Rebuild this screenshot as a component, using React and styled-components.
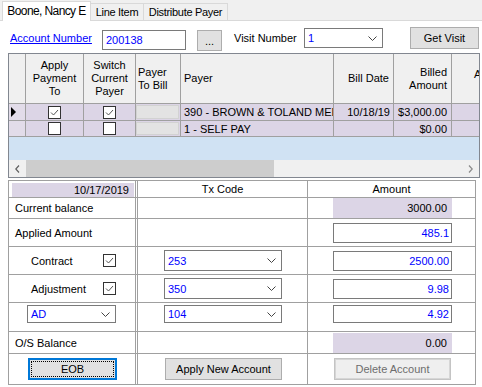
import styled, { createGlobalStyle } from "styled-components";

const PURPLE = "#dcd5e6";
const LINE = "#a0a0a0";
const FIELD = "#7a7a7a";
const BLUE = "#0000ff";

const GlobalStyle = createGlobalStyle`
  html, body {
    margin: 0;
    padding: 0;
    background: #fff;
  }
  body {
    font-family: "Liberation Sans", Arial, sans-serif;
    font-size: 11px;
    color: #000;
  }
  * {
    box-sizing: border-box;
  }
`;

const Window = styled.div`
  width: 482px;
  height: 387px;
  overflow: hidden;
  background: #fff;
`;

/* ---------- tabs ---------- */

const TabStrip = styled.div`
  display: flex;
  align-items: flex-end;
  height: 21px;
  padding-left: 2px;
  background: #f0f0f0;
  border-bottom: 1px solid #d9d9d9;
`;

const Tab = styled.div`
  display: flex;
  align-items: center;
  justify-content: center;
  width: ${({ $w }) => $w}px;
  height: ${({ $active }) => ($active ? "20px" : "17px")};
  margin-bottom: ${({ $active }) => ($active ? "-1px" : "0")};
  padding-bottom: ${({ $active }) => ($active ? "2px" : "0")};
  background: ${({ $active }) => ($active ? "#fff" : "#f0f0f0")};
  border: 1px solid #d9d9d9;
  border-bottom: none;
  border-left-width: ${({ $active }) => ($active ? "1px" : "0")};
  font-size: ${({ $active }) => ($active ? "12px" : "11px")};
  letter-spacing: ${({ $active }) => ($active ? "-0.6px" : "-0.3px")};
  white-space: nowrap;
`;

/* ---------- toolbar ---------- */

const Toolbar = styled.div`
  display: flex;
  align-items: flex-start;
  height: 23px;
  margin-top: 6px;
  padding-left: 10px;
`;

const AccountLink = styled.a`
  width: 92px;
  margin-top: 5px;
  line-height: 13px;
  color: ${BLUE};
  text-decoration: underline;
  cursor: pointer;
`;

const ToolLabel = styled.span`
  width: 70px;
  margin: 5px 0 0 12px;
  line-height: 13px;
`;

const TextField = styled.div`
  display: flex;
  align-items: center;
  width: ${({ $w }) => $w}px;
  height: ${({ $h }) => $h || 20}px;
  margin-top: ${({ $mt }) => $mt || 0}px;
  padding: 0 3px;
  border: 1px solid ${FIELD};
  background: #fff;
  color: ${BLUE};
`;

const WinButton = styled.button`
  display: flex;
  align-items: center;
  justify-content: center;
  width: ${({ $w }) => $w}px;
  height: ${({ $h }) => $h || 21}px;
  margin: ${({ $mt }) => $mt || 0}px 0 0 ${({ $ml }) => $ml || 0}px;
  padding: 0;
  font: inherit;
  color: ${({ disabled }) => (disabled ? "#6d6d6d" : "#000")};
  background: ${({ disabled }) => (disabled ? "#efefef" : "#e1e1e1")};
  border: 1px solid
    ${({ disabled, $focused }) =>
      $focused ? "#0078d7" : disabled ? "#c4c4c4" : "#adadad"};
  box-shadow: ${({ disabled, $focused }) =>
    $focused
      ? "inset 0 0 0 1px #0078d7"
      : disabled
      ? "inset 0 0 0 1px #d6d6d6"
      : "none"};
  outline: ${({ $focused }) => ($focused ? "1px dotted #000" : "none")};
  outline-offset: -4px;
`;

const SelectBox = styled.div`
  display: flex;
  align-items: center;
  justify-content: space-between;
  width: ${({ $w }) => $w}px;
  height: ${({ $h }) => $h || 21}px;
  margin-top: ${({ $mt }) => $mt || 0}px;
  padding: 0 5px 0 3px;
  border: 1px solid ${FIELD};
  background: #fff;
  color: ${BLUE};
`;

const Chevron = () => (
  <svg width="9" height="5" viewBox="0 0 9 5">
    <path d="M0.5 0.5 L4.5 4.5 L8.5 0.5" fill="none" stroke="#444" strokeWidth="1" />
  </svg>
);

const Select = ({ value, ...rest }) => (
  <SelectBox {...rest}>
    <span>{value}</span>
    <Chevron />
  </SelectBox>
);

/* ---------- payer grid ---------- */

const GridFrame = styled.div`
  display: flex;
  flex-direction: column;
  width: 472px;
  margin: 3px 0 0 8px;
  border: 1px solid #828790;
  overflow: hidden;
`;

const GridTable = styled.div`
  display: grid;
  grid-template-columns: 17px 58px 52px 45px 153px 60px 58px 80px;
  grid-template-rows: 50px 17px 16px;
`;

const justify = (a) =>
  a === "left" ? "flex-start" : a === "right" ? "flex-end" : "center";

const HeadCell = styled.div`
  display: flex;
  align-items: center;
  justify-content: ${({ $align }) => justify($align)};
  text-align: ${({ $align }) => $align || "center"};
  padding: ${({ $pad }) => $pad || "0 2px"};
  line-height: 13px;
  background: #f0f0f0;
  border-right: 1px solid ${LINE};
  border-bottom: 1px solid ${LINE};
  white-space: nowrap;
  overflow: hidden;
`;

const DataCell = styled.div`
  display: flex;
  align-items: center;
  justify-content: ${({ $align }) => justify($align)};
  padding: ${({ $pad }) => $pad || "0 3px"};
  background: ${({ $header }) => ($header ? "#e2dce9" : PURPLE)};
  border-right: 1px solid ${LINE};
  border-bottom: 1px solid ${LINE};
  white-space: nowrap;
  overflow: hidden;
`;

const Pointer = styled.span`
  width: 0;
  height: 0;
  border-left: 5px solid #000;
  border-top: 5px solid transparent;
  border-bottom: 5px solid transparent;
`;

const GrayBox = styled.div`
  flex: 1;
  align-self: stretch;
  margin: 1px 1px 1px 0;
  background: #e3e3e3;
  border: 1px solid #d2d2d2;
`;

const BlankArea = styled.div`
  height: 23px;
  background: #d0e2f3;
`;

const ScrollBar = styled.div`
  display: flex;
  height: 17px;
  background: #f0f0f0;
`;

const ScrollArrow = styled.div`
  display: flex;
  align-items: center;
  justify-content: center;
  width: 17px;
`;

const ScrollThumb = styled.div`
  width: 248px;
  background: #cdcdcd;
`;

const ScrollTrack = styled.div`
  flex: 1;
`;

const CheckFrame = styled.span`
  display: inline-flex;
  align-items: center;
  justify-content: center;
  width: 13px;
  height: 13px;
  border: 1px solid #333;
  background: #fff;
`;

const Check = ({ checked }) => (
  <CheckFrame>
    {checked && (
      <svg width="11" height="11" viewBox="0 0 11 11">
        <path d="M2 5.5 L4.5 8 L9 3" fill="none" stroke="#555" strokeWidth="1" />
      </svg>
    )}
  </CheckFrame>
);

/* ---------- distribution panel ---------- */

const Panel = styled.div`
  width: 468px;
  margin: 2px 0 0 8px;
  border: 1px solid ${LINE};
`;

const PanelRow = styled.div`
  display: grid;
  grid-template-columns: 127px 172px 1fr;
  height: ${({ $h }) => $h}px;
  border-bottom: 1px solid ${LINE};
  &:last-child {
    border-bottom: none;
  }
`;

const Cell = styled.div`
  display: flex;
  align-items: ${({ $top }) => ($top ? "flex-start" : "center")};
  justify-content: ${({ $center }) => ($center ? "center" : "flex-start")};
  padding-top: ${({ $top }) => ($top ? "2px" : "0")};
  padding-left: ${({ $pl }) => $pl || 0}px;
`;

const LabelCell = styled(Cell)`
  border-right: 1px solid ${LINE};
`;

const CodeCell = styled(Cell)`
  margin-left: 1px;
  border-left: 1px solid ${LINE};
  border-right: 1px solid ${LINE};
`;

const AmountCell = styled(Cell)``;

const DateBox = styled.div`
  flex: 1;
  align-self: stretch;
  margin: 2px 1px 0 3px;
  padding-right: 5px;
  line-height: 14px;
  text-align: right;
  background: ${PURPLE};
`;

const CheckLabel = styled.span`
  width: 72px;
`;

const AmountBox = styled.div`
  display: flex;
  align-items: center;
  justify-content: flex-end;
  width: 119px;
  height: ${({ $h }) => $h || 20}px;
  padding-right: ${({ $readOnly }) => ($readOnly ? "5px" : "2px")};
  background: ${({ $readOnly }) => ($readOnly ? PURPLE : "#fff")};
  border: ${({ $readOnly }) => ($readOnly ? "none" : `1px solid ${FIELD}`)};
  color: ${({ $readOnly }) => ($readOnly ? "#000" : BLUE)};
`;

const ArrowLeft = () => (
  <svg width="5" height="8" viewBox="0 0 5 8">
    <path d="M4 0.5 L0.8 4 L4 7.5" fill="none" stroke="#606060" strokeWidth="1.2" />
  </svg>
);

const ArrowRight = () => (
  <svg width="5" height="8" viewBox="0 0 5 8">
    <path d="M1 0.5 L4.2 4 L1 7.5" fill="none" stroke="#8a8a8a" strokeWidth="1.2" />
  </svg>
);

const payers = [
  { current: true, apply: true, sw: true, name: "390 - BROWN & TOLAND MED", date: "10/18/19", billed: "$3,000.00" },
  { current: false, apply: false, sw: false, name: "1 - SELF PAY", date: "", billed: "$0.00" },
];

const App = () => (
  <Window>
    <GlobalStyle />
    <TabStrip>
      <Tab $active $w={89}>Boone, Nancy E</Tab>
      <Tab $w={53}>Line Item</Tab>
      <Tab $w={84}>Distribute Payer</Tab>
    </TabStrip>

    <Toolbar>
      <AccountLink>Account Number</AccountLink>
      <TextField $w={84} $mt={3}>200138</TextField>
      <WinButton $w={25} $mt={3} $ml={11}>...</WinButton>
      <ToolLabel>Visit Number</ToolLabel>
      <Select value="1" $w={79} $h={20} $mt={1} />
      <WinButton $w={69} $h={22} $ml={27}>Get Visit</WinButton>
    </Toolbar>

    <GridFrame>
      <GridTable>
        <HeadCell />
        <HeadCell>Apply<br />Payment<br />To</HeadCell>
        <HeadCell>Switch<br />Current<br />Payer</HeadCell>
        <HeadCell $align="left">Payer<br />To Bill</HeadCell>
        <HeadCell $align="left" $pad="0 3px">Payer</HeadCell>
        <HeadCell $align="right" $pad="0 4px 0 0">Bill Date</HeadCell>
        <HeadCell $align="right" $pad="0 4px 0 0">Billed<br />Amount</HeadCell>
        <HeadCell $align="left" $pad="0 0 8px 22px">Applied</HeadCell>
        {payers.map((p) => (
          <>
            <DataCell $header $align="left" $pad="0 0 0 2px">{p.current && <Pointer />}</DataCell>
            <DataCell $align="center"><Check checked={p.apply} /></DataCell>
            <DataCell $align="center"><Check checked={p.sw} /></DataCell>
            <DataCell $pad="0"><GrayBox /></DataCell>
            <DataCell $align="left">{p.name}</DataCell>
            <DataCell $align="right">{p.date}</DataCell>
            <DataCell $align="right" $pad="0 4px 0 0">{p.billed}</DataCell>
            <DataCell />
          </>
        ))}
      </GridTable>
      <BlankArea />
      <ScrollBar>
        <ScrollArrow><ArrowLeft /></ScrollArrow>
        <ScrollThumb />
        <ScrollTrack />
        <ScrollArrow><ArrowRight /></ScrollArrow>
      </ScrollBar>
    </GridFrame>

    <Panel>
      <PanelRow $h={17}>
        <LabelCell><DateBox>10/17/2019</DateBox></LabelCell>
        <CodeCell $center>Tx Code</CodeCell>
        <AmountCell $center>Amount</AmountCell>
      </PanelRow>
      <PanelRow $h={21}>
        <LabelCell $pl={6}>Current balance</LabelCell>
        <CodeCell />
        <AmountCell $pl={25}><AmountBox $readOnly>3000.00</AmountBox></AmountCell>
      </PanelRow>
      <PanelRow $h={28}>
        <LabelCell $pl={6}>Applied Amount</LabelCell>
        <CodeCell />
        <AmountCell $pl={25}><AmountBox>485.1</AmountBox></AmountCell>
      </PanelRow>
      <PanelRow $h={28}>
        <LabelCell $pl={22}>
          <CheckLabel>Contract</CheckLabel>
          <Check checked />
        </LabelCell>
        <CodeCell $pl={26}><Select value="253" $w={118} /></CodeCell>
        <AmountCell $pl={25}><AmountBox>2500.00</AmountBox></AmountCell>
      </PanelRow>
      <PanelRow $h={28}>
        <LabelCell $pl={22}>
          <CheckLabel>Adjustment</CheckLabel>
          <Check checked />
        </LabelCell>
        <CodeCell $pl={26}><Select value="350" $w={118} /></CodeCell>
        <AmountCell $pl={25}><AmountBox>9.98</AmountBox></AmountCell>
      </PanelRow>
      <PanelRow $h={29}>
        <LabelCell $pl={18} $top><Select value="AD" $w={89} $h={18} /></LabelCell>
        <CodeCell $pl={26} $top><Select value="104" $w={118} $h={18} /></CodeCell>
        <AmountCell $pl={25} $top><AmountBox $h={18}>4.92</AmountBox></AmountCell>
      </PanelRow>
      <PanelRow $h={22}>
        <LabelCell $pl={6}>O/S Balance</LabelCell>
        <CodeCell />
        <AmountCell $pl={25}><AmountBox $readOnly>0.00</AmountBox></AmountCell>
      </PanelRow>
      <PanelRow $h={30}>
        <LabelCell $pl={19}><WinButton $w={89} $h={22} $focused>EOB</WinButton></LabelCell>
        <CodeCell $pl={27}><WinButton $w={117} $h={22}>Apply New Account</WinButton></CodeCell>
        <AmountCell $pl={26}><WinButton $w={117} $h={22} disabled>Delete Account</WinButton></AmountCell>
      </PanelRow>
    </Panel>
  </Window>
);

export default App;
